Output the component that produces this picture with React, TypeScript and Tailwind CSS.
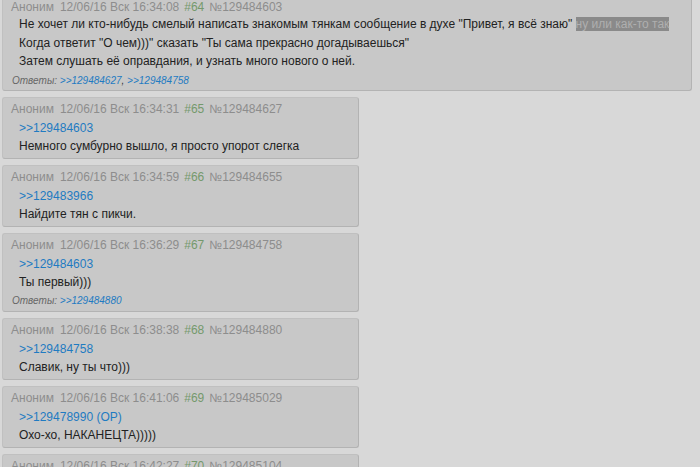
import React from 'react';

type Post = {
  num: number;
  id: string;
  time: string;
  reply?: string;
  lines: React.ReactNode[];
  answers?: string[];
};

const posts: Post[] = [
  { num: 65, id: '129484627', time: '16:34:31', reply: '>>129484603', lines: ['Немного сумбурно вышло, я просто упорот слегка'] },
  { num: 66, id: '129484655', time: '16:34:59', reply: '>>129483966', lines: ['Найдите тян с пикчи.'] },
  { num: 67, id: '129484758', time: '16:36:29', reply: '>>129484603', lines: ['Ты первый)))'], answers: ['>>129484880'] },
  { num: 68, id: '129484880', time: '16:38:38', reply: '>>129484758', lines: ['Славик, ну ты что)))'] },
  { num: 69, id: '129485029', time: '16:41:06', reply: '>>129478990 (OP)', lines: ['Охо-хо, НАКАНЕЦТА)))))'] },
  { num: 70, id: '129485104', time: '16:42:27', lines: [] },
];

function Header({ num, id, time }: { num: number; id: string; time: string }) {
  return (
    <div className="pl-[8px] pt-[2px] leading-[19px] text-[12px] text-[#8d8d8d] whitespace-nowrap">
      <span>Аноним</span>
      <span className="ml-[6px]">12/06/16 Вск {time}</span>
      <span className="ml-[5px] text-[#74996c]">#{num}</span>
      <span className="ml-[5px]">№{id}</span>
    </div>
  );
}

function Answers({ items }: { items: string[] }) {
  return (
    <div className="pl-[9px] leading-[17px] text-[10px] italic text-[#666]">
      Ответы:{' '}
      {items.map((a, i) => (
        <span key={a}>
          <span className="text-[#1f7bc2]">{a}</span>
          {i < items.length - 1 && <span className="text-[#333]">, </span>}
        </span>
      ))}
    </div>
  );
}

function Bubble({ post }: { post: Post }) {
  return (
    <div className="mt-[6px] w-[357px] rounded-[3px] border border-[#c0c0c0] border-r-[#b3b3b3] border-b-[#b3b3b3] bg-[#c8c8c8] pb-[2px]">
      <Header num={post.num} id={post.id} time={post.time} />
      <div className="pl-[16px] text-[12px] leading-[18.5px] text-[#222]">
        {post.reply && <div className="text-[#1f7bc2]">{post.reply}</div>}
        {post.lines.map((l, i) => (
          <div key={i}>{l}</div>
        ))}
      </div>
      {post.answers && <Answers items={post.answers} />}
    </div>
  );
}

export default function App() {
  return (
    <div
      className="h-[467px] w-[700px] overflow-hidden bg-[#d8d8d8] pl-[2px]"
      style={{ fontFamily: '"Liberation Sans", Tahoma, Arial, sans-serif' }}
    >
      {/* первый пост, верх обрезан */}
      <div className="-mt-[5px] w-[690px] rounded-[3px] border border-[#c0c0c0] border-r-[#b3b3b3] border-b-[#b3b3b3] bg-[#c8c8c8] pb-[1px]">
        <Header num={64} id="129484603" time="16:34:08" />
        <div className="-mt-[2px] mb-[1px] pl-[16px] text-[12px] leading-[18.5px] text-[#222] whitespace-nowrap">
          <div>
            Не хочет ли кто-нибудь смелый написать знакомым тянкам сообщение в духе "Привет, я всё знаю"{' '}
            <span className="bg-[#8a8a8a] text-[#afafaf]">ну или как-то так</span>
          </div>
          <div>Когда ответит "О чем)))" сказать "Ты сама прекрасно догадываешься"</div>
          <div>Затем слушать её оправдания, и узнать много нового о ней.</div>
        </div>
        <Answers items={['>>129484627', '>>129484758']} />
      </div>

      {posts.map((p) => (
        <Bubble key={p.num} post={p} />
      ))}
    </div>
  );
}
